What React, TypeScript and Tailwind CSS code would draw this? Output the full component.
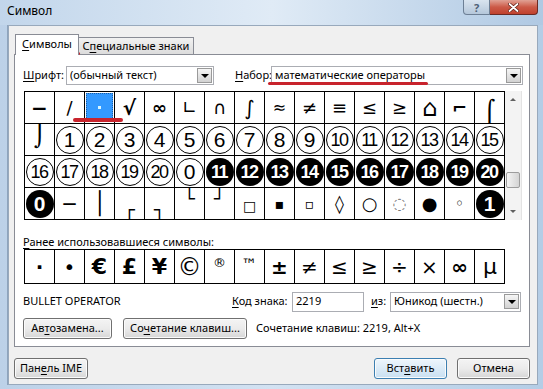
import React from "react";

type Cell =
  | { k: "t"; t: string; c?: string }
  | { k: "o"; t: string }
  | { k: "f"; t: string }
  | { k: "sel" };

const row1: Cell[] = [
  { k: "t", t: "−", c: "text-[20px] font-bold" },
  { k: "t", t: "∕", c: "text-[18px]" },
  { k: "sel" },
  { k: "t", t: "√", c: "text-[20px] font-bold" },
  { k: "t", t: "∞", c: "text-[18px] font-bold" },
  { k: "t", t: "∟", c: "text-[18px]" },
  { k: "t", t: "∩", c: "text-[18px]" },
  { k: "t", t: "∫", c: "text-[20px]" },
  { k: "t", t: "≈", c: "text-[16px]" },
  { k: "t", t: "≠", c: "text-[18px]" },
  { k: "t", t: "≡", c: "text-[18px]" },
  { k: "t", t: "≤", c: "text-[18px]" },
  { k: "t", t: "≥", c: "text-[18px]" },
  { k: "t", t: "⌂", c: "text-[24px]" },
  { k: "t", t: "⌐", c: "text-[18px] font-bold" },
  { k: "t", t: "⌠", c: "text-[22px] pt-[8px]" },
];

const row2: Cell[] = [
  { k: "t", t: "⌡", c: "text-[22px] pb-[8px]" },
  ...["1", "2", "3", "4", "5", "6", "7", "8", "9", "10", "11", "12", "13", "14", "15"].map(
    (t) => ({ k: "o", t } as Cell)
  ),
];

const row3: Cell[] = [
  ...["16", "17", "18", "19", "20", "0"].map((t) => ({ k: "o", t } as Cell)),
  ...["11", "12", "13", "14", "15", "16", "17", "18", "19", "20"].map((t) => ({ k: "f", t } as Cell)),
];

const row4: Cell[] = [
  { k: "f", t: "0" },
  { k: "t", t: "─", c: "text-[20px] font-bold" },
  { k: "t", t: "│", c: "text-[22px]" },
  { k: "t", t: "┌", c: "text-[18px] pt-[12px]" },
  { k: "t", t: "┐", c: "text-[18px] pt-[12px]" },
  { k: "t", t: "└", c: "text-[18px] pb-[10px]" },
  { k: "t", t: "┘", c: "text-[18px] pb-[10px]" },
  { k: "t", t: "□", c: "text-[14px] pt-[4px]" },
  { k: "t", t: "▪", c: "text-[14px]" },
  { k: "t", t: "▫", c: "text-[14px]" },
  { k: "t", t: "◊", c: "text-[18px]" },
  { k: "t", t: "○", c: "text-[18px] font-bold" },
  { k: "t", t: "◌", c: "text-[16px] text-[#777]" },
  { k: "t", t: "●", c: "text-[18px]" },
  { k: "t", t: "◦", c: "text-[16px]" },
  { k: "f", t: "1" },
];

const recent: { t: string; c: string }[] = [
  { t: "·", c: "text-[20px] font-bold" },
  { t: "•", c: "text-[20px]" },
  { t: "€", c: "text-[22px] font-bold" },
  { t: "£", c: "text-[22px] font-bold" },
  { t: "¥", c: "text-[22px] font-bold" },
  { t: "©", c: "text-[24px]" },
  { t: "®", c: "text-[13px] pb-[8px]" },
  { t: "™", c: "text-[16px] pb-[4px]" },
  { t: "±", c: "text-[20px] font-bold" },
  { t: "≠", c: "text-[20px]" },
  { t: "≤", c: "text-[20px]" },
  { t: "≥", c: "text-[20px]" },
  { t: "÷", c: "text-[20px]" },
  { t: "×", c: "text-[20px]" },
  { t: "∞", c: "text-[20px] font-bold" },
  { t: "µ", c: "text-[22px]" },
];

function GridCell({ cell }: { cell: Cell }) {
  const base =
    "w-[30px] h-[32px] border-r border-b border-black flex items-center justify-center overflow-hidden";
  if (cell.k === "sel") {
    return (
      <div className={base + " p-[1px]"}>
        <div className="w-full h-full bg-[#3399ff] border border-dotted border-[#1c5fa8] flex items-center justify-center">
          <div className="w-[3px] h-[3px] bg-[#d8f6ff]" />
        </div>
      </div>
    );
  }
  if (cell.k === "o" || cell.k === "f") {
    const two = cell.t.length > 1;
    const filled = cell.k === "f";
    return (
      <div className={base}>
        <div
          className={
            "w-[28px] h-[28px] shrink-0 rounded-full flex items-center justify-center leading-none font-['Liberation_Sans',sans-serif] " +
            (filled ? "bg-black text-white font-bold " : "border border-black ") +
            (two ? "text-[18px] tracking-[-1.5px] pr-[1px]" : "text-[21px]")
          }
        >
          {cell.t}
        </div>
      </div>
    );
  }
  return (
    <div className={base + " font-['DejaVu_Sans',sans-serif] leading-none " + (cell.c ?? "")}>
      {cell.t}
    </div>
  );
}

function DropBtn() {
  return (
    <div className="w-[15px] h-[15px] border border-[#9a9a9a] bg-gradient-to-b from-[#f6f6f6] to-[#d2d2d2] flex items-center justify-center">
      <div className="w-0 h-0 border-l-[4px] border-r-[4px] border-t-[4px] border-l-transparent border-r-transparent border-t-black" />
    </div>
  );
}

function Btn({
  children,
  w,
  def,
}: {
  children: React.ReactNode;
  w: string;
  def?: boolean;
}) {
  return (
    <div
      className={
        w +
        " h-[21px] rounded-[3px] border flex items-center justify-center shadow-[inset_0_0_0_1px_#fbfbfb] " +
        (def
          ? "border-[#3c7fb1] bg-gradient-to-b from-[#eef6fc] to-[#c9e0f2]"
          : "border-[#707070] bg-gradient-to-b from-[#f4f4f4] via-[#ebebeb] to-[#d6d6d6]")
      }
    >
      {children}
    </div>
  );
}

const U = ({ children }: { children: React.ReactNode }) => (
  <span className="underline underline-offset-[2px] decoration-[1px]">{children}</span>
);

export default function App() {
  return (
    <div className="w-[543px] h-[389px] overflow-hidden flex flex-col bg-gradient-to-r from-[#bcd1e8] via-[#d3e2f2] to-[#b4cde6] font-['Noto_Sans','Open_Sans',sans-serif] text-[11px] text-black relative">
      {/* title bar */}
      <div className="h-[25px] shrink-0 flex items-start justify-between bg-gradient-to-r from-[#c2d6eb] via-[#e0ebf6] to-[#b0c9e3]">
        <div className="pl-[7px] pt-[3px] text-[12px] leading-[16px] text-black">Символ</div>
        <div className="flex mr-[5px]">
          <div className="w-[27px] h-[15px] rounded-bl-[4px] border border-t-0 border-[#6d7f95] bg-gradient-to-b from-[#d9e4ef] to-[#b5c7da] flex items-center justify-center text-[11px] font-bold text-[#4d5f76] leading-none">
            ?
          </div>
          <div className="w-[48px] h-[15px] rounded-br-[4px] border border-l-0 border-t-0 border-[#6b2a24] bg-gradient-to-b from-[#e0a195] via-[#cc5a48] to-[#c0412d] flex items-center justify-center">
            <svg width="11" height="9" viewBox="0 0 11 9">
              <path d="M1.5 1 L9.5 8 M9.5 1 L1.5 8" stroke="#5a1a12" strokeWidth="3.2" strokeLinecap="round" />
              <path d="M1.5 1 L9.5 8 M9.5 1 L1.5 8" stroke="#ffffff" strokeWidth="1.8" strokeLinecap="round" />
            </svg>
          </div>
        </div>
      </div>

      {/* body */}
      <div className="flex-1 flex px-[5px] pb-[4px]">
        <div className="w-[3px] border-r border-[#8ea4bd]" />
        <div className="flex-1 bg-[#f0f0f0] border border-[#98a9bc] flex flex-col">
          {/* tabs */}
          <div className="flex items-end pl-[6px] pt-[7px] h-[28px]">
            <div className="h-[21px] w-[64px] bg-white border border-b-0 border-[#898c95] flex items-center justify-center relative z-10 -mb-[1px] pb-[1px]">
              <span>
                <U>С</U>имволы
              </span>
            </div>
            <div className="h-[17px] w-[115px] bg-gradient-to-b from-[#f2f2f2] to-[#dcdcdc] border border-l-0 border-b-0 border-[#898c95] flex items-center justify-center">
              <span>
                С<U>п</U>ециальные знаки
              </span>
            </div>
          </div>
          {/* panel */}
          <div className="ml-[5px] mr-[7px] h-[293px] bg-white border border-[#898c95] flex flex-col pl-[8px]">
            <div className="flex items-center mt-[11px] h-[19px]">
              <div className="w-[43px]">
                <U>Ш</U>рифт:
              </div>
              <div className="w-[148px] h-[19px] border border-[#abadb3] flex items-center justify-between pl-[3px] pr-[1px]">
                <span>(обычный текст)</span>
                <DropBtn />
              </div>
              <div className="ml-[21px] w-[36px]">
                <U>Н</U>абор:
              </div>
              <div className="w-[252px] h-[19px] border border-[#abadb3] flex items-center justify-between pl-[3px] pr-[1px]">
                <span>математические операторы</span>
                <DropBtn />
              </div>
            </div>

            {/* symbol grid */}
            <div className="flex mt-[6px] ml-[1px]">
              <div className="border-l border-t border-black grid grid-cols-[repeat(16,30px)]">
                {[...row1, ...row2, ...row3, ...row4].map((c, i) => (
                  <GridCell key={i} cell={c} />
                ))}
              </div>
              <div className="w-[17px] h-[129px] bg-[#f3f3f3] border-r border-[#e3e3e3] flex flex-col items-center justify-between">
                <div className="h-[17px] flex items-center justify-center">
                  <div className="w-0 h-0 border-l-[3px] border-r-[3px] border-b-[3px] border-l-transparent border-r-transparent border-b-[#606060]" />
                </div>
                <div className="flex-1 w-full flex flex-col justify-end pb-[15px] px-[1px]">
                  <div className="h-[16px] w-full rounded-[2px] border border-[#9c9c9c] bg-gradient-to-r from-[#f4f4f4] to-[#d4d4d4]" />
                </div>
                <div className="h-[17px] flex items-center justify-center">
                  <div className="w-0 h-0 border-l-[3px] border-r-[3px] border-t-[3px] border-l-transparent border-r-transparent border-t-[#606060]" />
                </div>
              </div>
            </div>

            <div className="mt-[14px] leading-[15px]">
              <U>Р</U>анее использовавшиеся символы:
            </div>
            <div className="mt-[0px] ml-[1px] w-[481px] h-[35px] border border-black flex">
              {recent.map((r, i) => (
                <div
                  key={i}
                  className={
                    "w-[30px] shrink-0 flex items-center justify-center leading-none font-['DejaVu_Sans',sans-serif] " +
                    (i < 15 ? "border-r border-black " : "") +
                    r.c
                  }
                >
                  {r.t}
                </div>
              ))}
            </div>

            <div className="flex items-center mt-[7px] h-[21px]">
              <div className="w-[209px]">BULLET OPERATOR</div>
              <div className="w-[60px]">
                <U>К</U>од знака:
              </div>
              <div className="w-[72px] h-[20px] border border-[#abadb3] flex items-center pl-[3px]">2219</div>
              <div className="ml-[7px] w-[19px]">
                <U>и</U>з:
              </div>
              <div className="w-[131px] h-[20px] border border-[#abadb3] flex items-center justify-between pl-[3px] pr-[1px]">
                <span>Юникод (шестн.)</span>
                <DropBtn />
              </div>
            </div>

            <div className="flex items-center mt-[6px]">
              <Btn w="w-[89px]">
                <span>
                  Ав<U>т</U>озамена...
                </span>
              </Btn>
              <div className="ml-[11px]">
                <Btn w="w-[124px]">
                  <span>
                    Со<U>ч</U>етание клавиш...
                  </span>
                </Btn>
              </div>
              <div className="ml-[9px]">Сочетание клавиш: 2219, Alt+X</div>
            </div>
          </div>

          {/* bottom buttons */}
          <div className="flex items-center mt-[11px] pl-[5px] pr-[7px]">
            <Btn w="w-[74px]">
              <span>
                Пан<U>е</U>ль IME
              </span>
            </Btn>
            <div className="flex-1" />
            <Btn w="w-[73px]" def>
              <span>
                Вст<U>а</U>вить
              </span>
            </Btn>
            <div className="ml-[10px]">
              <Btn w="w-[73px]">
                <span>Отмена</span>
              </Btn>
            </div>
          </div>
        </div>
      </div>

      {/* annotation underlines */}
      <div className="absolute left-[15px] top-[52px] w-[65px] h-[3px] rounded-full bg-[#c8232c]" />
      <div className="absolute left-[268px] top-[82px] w-[160px] h-[3px] rounded-full bg-[#c8232c]" />
      <div className="absolute left-[73px] top-[118px] w-[50px] h-[4px] rounded-full bg-[#c8232c]" />
    </div>
  );
}
